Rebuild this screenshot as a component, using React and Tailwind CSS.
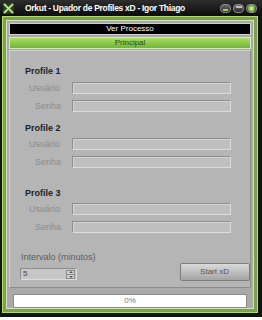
import React from 'react';

const font = { fontFamily: '"Liberation Sans", Arial, sans-serif' };

function TitleIcon() {
    return (
        <svg width="11" height="11" viewBox="0 0 11 11" className="shrink-0">
            <rect x="0" y="0" width="11" height="11" fill="#2a3a1c" />
            <path d="M1 1 L10 10 M10 1 L1 10" stroke="#8fd14a" strokeWidth="2.4" />
            <path d="M1 1 L10 10 M10 1 L1 10" stroke="#d6f5a8" strokeWidth="0.8" />
        </svg>
    );
}

function WinButton({ kind }) {
    return (
        <div className="w-[11px] h-[9px] rounded-[4px] bg-gradient-to-b from-[#6a6a6a] to-[#2c2c2c] border border-[#8a8a8a] flex items-center justify-center">
            {kind === 'min' && <div className="w-[5px] h-[2px] mt-[3px] bg-[#9fd35a]" />}
            {kind === 'max' && <div className="w-[6px] h-[2px] mb-[2px] bg-[#bdbdbd]" />}
            {kind === 'close' && (
                <div className="w-[7px] h-[7px] rounded-full bg-[#7fbf3a] flex items-center justify-center text-[6px] leading-none font-bold text-white">
                    x
                </div>
            )}
        </div>
    );
}

function Field({ label, pad }) {
    return (
        <div className="flex items-center h-[12px]">
            <div className={`w-[47px] text-[9px] leading-[12px] text-[#8a8a8a] ${pad}`}>{label}</div>
            <div className="w-[159px] h-[12px] bg-[#bfbfbf] border border-t-[#8e8e8e] border-l-[#8e8e8e] border-b-[#dcdcdc] border-r-[#dcdcdc] shadow-[inset_1px_1px_0_#d4d4d4]" />
        </div>
    );
}

function Profile({ n, top, headerGap }) {
    return (
        <div className={`flex flex-col ${top}`}>
            <div className="h-[10px] leading-[10px] text-[9px] font-bold text-[#222]">Profile {n}</div>
            <div className={`flex flex-col gap-[6px] ${headerGap}`}>
                <Field label="Usuário" pad="pl-[4px]" />
                <Field label="Senha" pad="pl-[10px]" />
            </div>
        </div>
    );
}

export default function App() {
    return (
        <div className="w-[262px] h-[320px] bg-white overflow-hidden" style={font}>
            <div className="h-[317px] bg-[#141414] flex flex-col">
                {/* title bar */}
                <div className="h-[16px] flex items-center pl-[3px] pr-[5px] bg-gradient-to-b from-[#2e2e2e] to-[#0c0c0c]">
                    <TitleIcon />
                    <div className="ml-[11px] text-[8.5px] tracking-[-0.3px] font-bold text-white leading-none whitespace-nowrap">
                        Orkut - Upador de Profiles xD - Igor Thiago
                    </div>
                    <div className="ml-auto flex gap-[2px]">
                        <WinButton kind="min" />
                        <WinButton kind="max" />
                        <WinButton kind="close" />
                    </div>
                </div>

                {/* green frame */}
                <div className="ml-[2px] mr-[4px] h-[297px] bg-[#b2dc72] p-[1px]">
                    <div className="h-full bg-[#7da34a] p-[3px]">
                        <div className="h-full bg-[#d3e3bd] p-[1px]">
                            <div className="h-full bg-[#a9a9a9] pt-[2px] pl-[2px] pr-[2px] flex flex-col">
                                <div className="h-[12px] bg-black border border-[#cfcfcf] flex items-center justify-center text-[8px] text-white leading-none">
                                    Ver Processo
                                </div>
                                <div className="mt-[2px] h-[12px] bg-gradient-to-b from-[#a9de62] to-[#72b436] border border-[#d6e9bd] flex items-center justify-center text-[8px] text-[#2c4a18] leading-none">
                                    Principal
                                </div>

                                {/* main panel */}
                                <div className="mt-[1px] h-[238px] bg-[#b5b5b5] border border-t-[#d0d0d0] border-l-[#d0d0d0] border-b-[#8c8c8c] border-r-[#8c8c8c] pl-[15px] pt-[15px] flex flex-col">
                                    <Profile n={1} top="" headerGap="mt-[6px]" />
                                    <Profile n={2} top="mt-[11px]" headerGap="mt-[5px]" />
                                    <Profile n={3} top="mt-[20px]" headerGap="mt-[5px]" />

                                    <div className="mt-[19px] flex items-end -ml-[4px]">
                                        <div className="flex flex-col">
                                            <div className="h-[10px] leading-[10px] text-[9px] text-[#5c5c5c]">Intervalo (minutos)</div>
                                            <div className="mt-[6px] -ml-[1px] w-[57px] h-[12px] bg-[#c6c6c6] border border-t-[#8e8e8e] border-l-[#8e8e8e] border-b-[#dcdcdc] border-r-[#dcdcdc] flex items-center">
                                                <span className="pl-[2px] text-[8px] leading-none text-[#444]">5</span>
                                                <div className="ml-auto mr-[1px] w-[9px] h-[9px] border border-[#8a8a8a] bg-[#d4d4d4] flex flex-col items-center justify-center gap-[1px]">
                                                    <div className="w-0 h-0 border-l-[2px] border-r-[2px] border-b-[2px] border-l-transparent border-r-transparent border-b-[#555]" />
                                                    <div className="w-[7px] h-px bg-[#8a8a8a]" />
                                                    <div className="w-0 h-0 border-l-[2px] border-r-[2px] border-t-[2px] border-l-transparent border-r-transparent border-t-[#555]" />
                                                </div>
                                            </div>
                                        </div>
                                        <div className="ml-[84px] mb-[-1px] w-[70px] h-[18px] rounded-[2px] bg-gradient-to-b from-[#dadada] to-[#a4a4a4] border border-[#7d7d7d] flex items-center justify-center text-[8px] text-[#555] leading-none">
                                            Start xD
                                        </div>
                                    </div>
                                </div>

                                {/* progress */}
                                <div className="mt-[6px] mx-[4px] h-[14px] bg-white border border-[#8a8a8a] flex items-center justify-center text-[8px] text-[#777] leading-none">
                                    0%
                                </div>
                            </div>
                        </div>
                    </div>
                </div>
            </div>
        </div>
    );
}
